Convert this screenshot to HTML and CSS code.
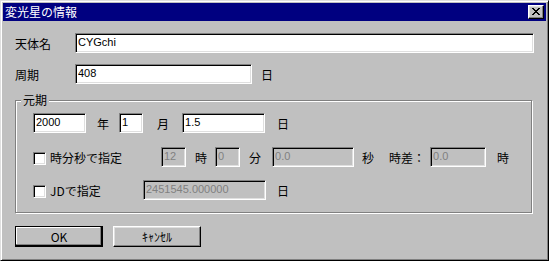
FILE: index.html
```html
<!DOCTYPE html>
<html lang="ja">
<head>
    <meta charset="UTF-8">
    <title>変光星の情報</title>
    <link rel="stylesheet" href="styles.css">
</head>
<body>
    <div class="window">
        <div class="titlebar">
            <span class="title">変光星の情報</span>
            <button class="close-btn" type="button">
                <svg width="8" height="7" viewBox="0 0 8 7" shape-rendering="crispEdges">
                    <path d="M0 0h2v1h-2z M6 0h2v1h-2z M1 1h2v1h-2z M5 1h2v1h-2z M2 2h4v1h-4z M3 3h2v1h-2z M2 4h4v1h-4z M1 5h2v1h-2z M5 5h2v1h-2z M0 6h2v1h-2z M6 6h2v1h-2z" fill="#000"/>
                </svg>
            </button>
        </div>

        <div class="dialog-body">
            <div class="row">
                <label class="field-label">天体名</label>
                <input class="edit name-edit" type="text" value="CYGchi">
            </div>
            <div class="row period-row">
                <label class="field-label">周期</label>
                <input class="edit period-edit" type="text" value="408">
                <span class="period-unit">日</span>
            </div>

            <div class="group">
                <span class="group-title">元期</span>

                <div class="row">
                    <input class="edit year-edit" type="text" value="2000">
                    <span class="year-unit">年</span>
                    <input class="edit month-edit" type="text" value="1">
                    <span class="month-unit">月</span>
                    <input class="edit day-edit" type="text" value="1.5">
                    <span class="day-unit">日</span>
                </div>

                <div class="row hms-row">
                    <input class="check" type="checkbox">
                    <label class="hms-label">時分秒で指定</label>
                    <input class="edit hour-edit" type="text" value="12" disabled>
                    <span class="hour-unit">時</span>
                    <input class="edit min-edit" type="text" value="0" disabled>
                    <span class="min-unit">分</span>
                    <input class="edit sec-edit" type="text" value="0.0" disabled>
                    <span class="sec-unit">秒</span>
                    <span class="tz-label">時差：</span>
                    <input class="edit tz-edit" type="text" value="0.0" disabled>
                    <span class="tz-unit">時</span>
                </div>

                <div class="row jd-row">
                    <input class="check" type="checkbox">
                    <label class="jd-label">JDで指定</label>
                    <input class="edit jd-edit" type="text" value="2451545.000000" disabled>
                    <span class="jd-unit">日</span>
                </div>
            </div>

            <div class="buttons">
                <button class="btn btn-default" type="button">OK</button>
                <button class="btn cancel-btn" type="button">ｷｬﾝｾﾙ</button>
            </div>
        </div>
    </div>
</body>
</html>
```

FILE: styles.css
```css
body {
    margin: 0;
    background-color: #c0c0c0;
}
.window {
    width: 549px;
    height: 261px;
    box-sizing: border-box;
    background: #c0c0c0;
    border: 1px solid;
    border-color: #dfdfdf #000 #000 #dfdfdf;
    box-shadow: inset 1px 1px #fff, inset -1px -1px #808080;
    padding: 2px;
    font: 12px "Noto Sans CJK JP", sans-serif;
    color: #000;
}
.titlebar {
    height: 18px;
    background: #000080;
    color: #fff;
    display: flex;
    align-items: center;
    justify-content: space-between;
    padding: 0 2px;
}
.title {
    line-height: 18px;
}
.close-btn {
    width: 16px;
    height: 14px;
    padding: 0 0 1px 0;
    box-sizing: border-box;
    background: #c0c0c0;
    border: 1px solid;
    border-color: #fff #000 #000 #fff;
    box-shadow: inset -1px -1px #808080, inset 1px 1px #dfdfdf;
    display: flex;
    align-items: center;
    justify-content: center;
}
.dialog-body {
    padding: 12px 0 0 12px;
}
.row {
    display: flex;
    align-items: center;
    height: 20px;
}
.period-row {
    margin-top: 11px;
}
.field-label {
    width: 60px;
}
.edit {
    box-sizing: border-box;
    height: 20px;
    margin: 0;
    padding: 0 2px 2px 2px;
    border: 1px solid;
    border-color: #808080 #fff #fff #808080;
    box-shadow: inset 1px 1px #000, inset -1px -1px #dfdfdf;
    background: #fff;
    font: 11px "Liberation Sans", Arial, sans-serif;
    color: #000;
    outline: none;
}
.edit:disabled {
    background: #c0c0c0;
    color: #808080;
}
.name-edit { width: 459px; }
.period-edit { width: 177px; }
.period-unit { margin-left: 9px; }

.group {
    position: relative;
    box-sizing: border-box;
    width: 517px;
    height: 113px;
    margin-top: 16px;
    border: 1px solid #808080;
    box-shadow: inset 1px 1px #fff, 1px 1px #fff;
    padding: 12px 0 0 17px;
}
.group-title {
    position: absolute;
    top: -9px;
    left: 5px;
    padding: 0 2px;
    line-height: 16px;
    background: #c0c0c0;
}
.year-edit { width: 53px; }
.year-unit { margin-left: 11px; }
.month-edit { width: 24px; margin-left: 10px; }
.month-unit { margin-left: 14px; }
.day-edit { width: 83px; margin-left: 13px; }
.day-unit { margin-left: 12px; }

.hms-row { margin-top: 14px; }
.check {
    appearance: none;
    margin: 2px 0 0 0;
    width: 13px;
    height: 13px;
    box-sizing: border-box;
    border: 1px solid;
    border-color: #808080 #fff #fff #808080;
    box-shadow: inset 1px 1px #000, inset -1px -1px #dfdfdf;
    background: #fff;
}
.hms-label { width: 111px; margin-left: 4px; }
.hour-edit { width: 25px; }
.hour-unit { margin-left: 9px; }
.min-edit { width: 25px; margin-left: 8px; }
.min-unit { margin-left: 9px; }
.sec-edit { width: 82px; margin-left: 11px; }
.sec-unit { margin-left: 8px; }
.tz-label { margin-left: 15px; }
.tz-edit { width: 56px; margin-left: 5px; }
.tz-unit { margin-left: 11px; }

.jd-row { margin-top: 13px; }
.jd-label { width: 93px; margin-left: 4px; }
.jd-edit { width: 123px; }
.jd-unit { margin-left: 11px; }

.buttons {
    display: flex;
    margin-top: 13px;
}
.btn {
    width: 88px;
    height: 21px;
    margin: 0;
    padding: 0;
    box-sizing: border-box;
    background: #c0c0c0;
    border: 1px solid;
    border-color: #fff #000 #000 #fff;
    box-shadow: inset -1px -1px #808080, inset 1px 1px #dfdfdf;
    font: 12px "Noto Sans CJK JP", sans-serif;
    color: #000;
}
.btn-default {
    border-color: #000;
    box-shadow: inset -1px -1px #000, inset -2px -2px #808080, inset 1px 1px #fff;
}
.cancel-btn {
    margin-left: 10px;
}
```
